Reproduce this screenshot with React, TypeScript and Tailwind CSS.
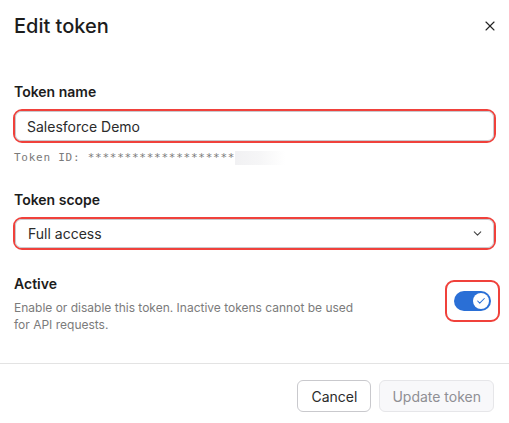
import { X, ChevronDown, Check } from "lucide-react";

export default function App() {
  return (
    <div className="w-[509px] h-[423px] bg-white text-[#1f1f1f] font-['Inter','Liberation_Sans',sans-serif] flex flex-col">
      {/* Header */}
      <div className="h-[52px] flex items-center justify-between pl-[14px] pr-[9px]">
        <h2 className="text-[20px] leading-[24px] font-medium text-[#1c1c1c]">Edit token</h2>
        <button className="text-[#222] p-0.5">
          <X size={16} strokeWidth={1.6} />
        </button>
      </div>

      {/* Body */}
      <div className="px-[13px] pt-[30px] flex flex-col">
        <label className="pl-px text-[14px] leading-[20px] font-semibold text-[#1c1c1c]">Token name</label>
        <div className="mt-[7px] border-2 border-[#f0413b] rounded-[9px]">
          <div className="h-[30px] border border-[#c9c9cd] rounded-[6px] flex items-center px-[11px] text-[14px] text-[#2b2b2b]">
            Salesforce Demo
          </div>
        </div>
        <div className="mt-[7px] pl-px flex items-center h-[16px]">
          <span className="font-['DejaVu_Sans_Mono',monospace] text-[11px] text-[#7a7a7a] tracking-[0.75px]">
            Token ID: ********************
          </span>
          <span className="h-[14px] w-[50px] bg-gradient-to-r from-[#f1f1f3] via-[#f6f6f7] to-white" />
        </div>

        <label className="mt-[24px] pl-px text-[14px] leading-[20px] font-semibold text-[#1c1c1c]">Token scope</label>
        <div className="mt-[7px] border-2 border-[#f0413b] rounded-[9px]">
          <div className="h-[29px] border border-[#c9c9cd] rounded-[6px] flex items-center justify-between pl-[12px] pr-[9px] text-[14px] text-[#2b2b2b]">
            <span>Full access</span>
            <ChevronDown size={13} strokeWidth={2} className="text-[#444]" />
          </div>
        </div>

        <div className="mt-[24px] flex items-start justify-between">
          <div className="pl-px">
            <div className="text-[14px] leading-[20px] font-semibold text-[#1c1c1c]">Active</div>
            <p className="mt-[5px] text-[12px] leading-[17px] text-[#7b7b7b] w-[345px]">
              Enable or disable this token. Inactive tokens cannot be used for API requests.
            </p>
          </div>
          <div className="mt-[6px] mr-[-4px] w-[55px] h-[42px] border-2 border-[#f0413b] rounded-[9px] flex items-center justify-center">
            <div className="w-[37px] h-[20px] rounded-full bg-[#2a6fd6] flex items-center justify-end pr-[2px]">
              <div className="w-[16px] h-[16px] rounded-full bg-white flex items-center justify-center">
                <Check size={10} strokeWidth={2.5} className="text-[#2a6fd6]" />
              </div>
            </div>
          </div>
        </div>
      </div>

      {/* Footer */}
      <div className="mt-auto border-t border-[#e3e3e3] h-[60px] flex items-start justify-end gap-[8px] pt-[16px] pr-[15px]">
        <button className="h-[32px] px-[13px] rounded-[6px] border border-[#c9c9cd] bg-white text-[14px] text-[#2b2b2b]">
          Cancel
        </button>
        <button className="h-[32px] px-[12px] rounded-[6px] border border-[#e6e6e9] bg-[#f8f8fa] text-[14px] text-[#8f8f94]">
          Update token
        </button>
      </div>
    </div>
  );
}
